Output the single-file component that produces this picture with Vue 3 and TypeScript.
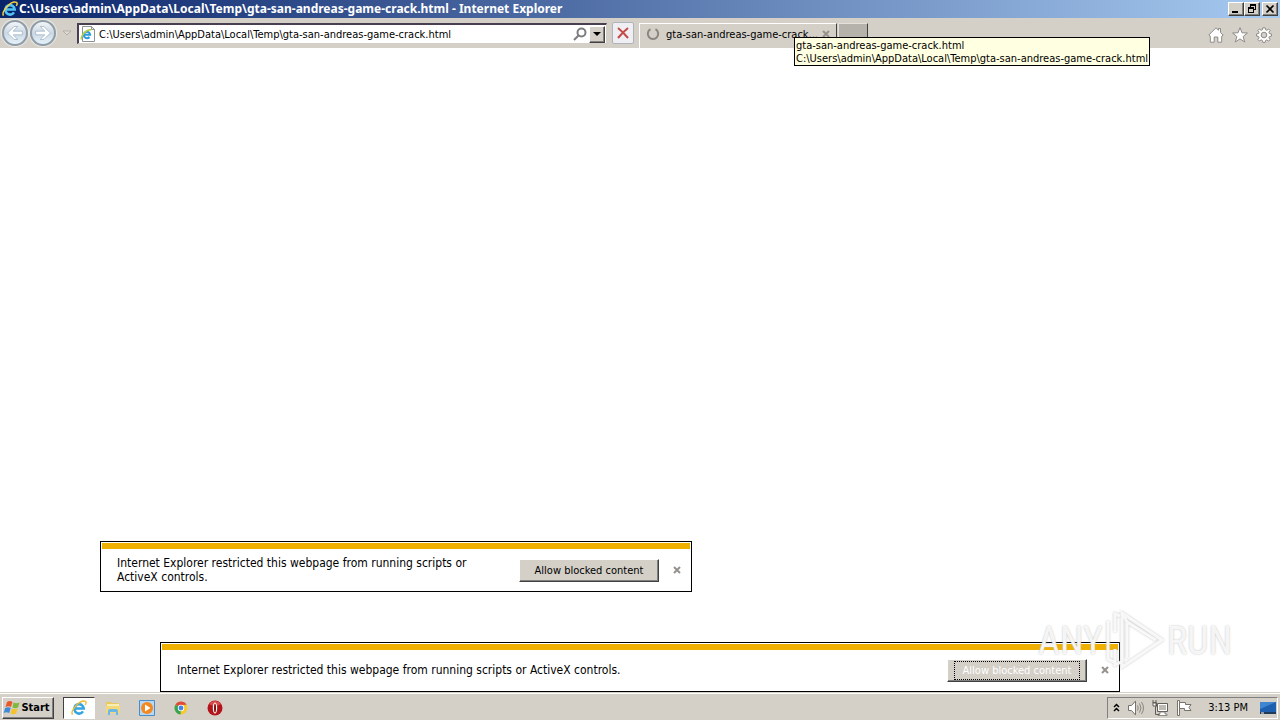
<script setup lang="ts">
import { ref } from 'vue'

const path = 'C:\\Users\\admin\\AppData\\Local\\Temp\\gta-san-andreas-game-crack.html'
const file = 'gta-san-andreas-game-crack.html'
const address = ref(path)
const notice = 'Internet Explorer restricted this webpage from running scripts or ActiveX controls.'
</script>

<template>
  <div class="desktop">
    <header class="titlebar">
      <svg class="ie" viewBox="0 0 16 16" aria-hidden="true">
        <path d="M3.5 8.5h9.2A4.7 4.7 0 1 0 12 11.4" fill="none" stroke="#4fc3f5" stroke-width="2.6" />
        <path d="M1.5 14.6C-1 11 9-1 14.5 1.4c1 .6.7 2-.2 3.4" fill="none" stroke="#f6d33c" stroke-width="1.5" />
      </svg>
      <h1>{{ path }} - Internet Explorer</h1>
      <div class="winbtns">
        <button class="wb" aria-label="Minimize"><svg viewBox="0 0 12 10"><path d="M2 7h6v2H2z" /></svg></button>
        <button class="wb" aria-label="Restore"><svg viewBox="0 0 12 10" shape-rendering="crispEdges"><path d="M4 0h6v6H8V5h1V2H5v1H4zM2 3h6v6H2zM3 5v3h4V5z" fill-rule="evenodd" /></svg></button>
        <button class="wb last" aria-label="Close"><svg viewBox="0 0 12 10"><path d="M2.5 1.5l7 7m0-7l-7 7" stroke="#000" stroke-width="1.7" /></svg></button>
      </div>
    </header>

    <nav class="toolbar">
      <div class="history">
        <button class="round" aria-label="Back"><svg viewBox="0 0 26 26"><path d="M5 13l7-7h4l-5 5h10v4H11l5 5h-4z" /></svg></button>
        <button class="round" aria-label="Forward"><svg viewBox="0 0 26 26"><path d="M21 13l-7-7h-4l5 5H5v4h10l-5 5h4z" /></svg></button>
        <button class="drop" aria-label="Recent pages"><svg viewBox="0 0 10 6"><path d="M1 1h8L5 5z" fill="#dedad5" stroke="#b5afa8" /></svg></button>
      </div>
      <div class="address">
        <svg class="page" viewBox="0 0 16 16" aria-hidden="true">
          <path d="M2.5.5h9l3 3v12h-12z" fill="#fff" stroke="#8e9299" />
          <path d="M11.5.5v3h3" fill="none" stroke="#8e9299" />
          <path d="M4 8.800h6.200A3.200 3.200 0 1 0 9.500 11" fill="none" stroke="#2e9be0" stroke-width="2" />
          <path d="M1.500 13.500C0 10 7 2.500 11.500 4" fill="none" stroke="#b5cf3a" stroke-width="1.500" />
        </svg>
        <input v-model="address" aria-label="Address" spellcheck="false" />
        <button class="search" aria-label="Search"><svg viewBox="0 0 14 14"><circle cx="8.500" cy="5.500" r="4" /><path d="M5.500 8.500L1 13" /></svg></button>
        <button class="combo" aria-label="Show address list"><svg viewBox="0 0 8 4"><path d="M0 0h8L4 4z" /></svg></button>
      </div>
      <button class="stop" aria-label="Stop"><svg viewBox="0 0 12 12"><path d="M1 1q5 4 10 10M11 1Q6 5 1 11" /></svg></button>
      <div class="tab">
        <svg class="spin" viewBox="0 0 14 14" aria-hidden="true"><path d="M4.500 2.200A5.200 5.200 0 1 0 9.500 2.200" /></svg>
        <span class="tabname">gta-san-andreas-game-crack...</span>
        <button class="x" aria-label="Close tab"><svg viewBox="0 0 8 8"><path d="M1 1l6 6M7 1L1 7" /></svg></button>
      </div>
      <button class="newtab" aria-label="New tab"></button>
      <div class="tools">
        <button aria-label="Home"><svg viewBox="0 0 16 16"><path d="M.8 8L8 .8l2.500 2.500V1.500h2v4L15.200 8l-1.500 1.200V15.200H9.800V10H6.200v5.200H2.300V9.200z" /></svg></button>
        <button aria-label="Favorites"><svg viewBox="0 0 16 16"><path d="M8 .7l2 5.100 5.400.2-4.200 3.500 1.500 5.500L8 11.900 3.300 15l1.500-5.500L.6 6 6 5.800z" /></svg></button>
        <button aria-label="Tools"><svg viewBox="0 0 16 16"><path d="M6.800.8h2.400l.4 2 1.300.5L12.600 2l1.500 1.500-1.200 1.700.5 1.300 2 .4v2.300l-2 .4-.5 1.300 1.200 1.700-1.500 1.500-1.700-1.200-1.300.5-.4 2H6.800l-.4-2-1.300-.5L3.400 14l-1.500-1.500 1.200-1.700-.5-1.300-2-.4V6.900l2-.4.5-1.300L1.900 3.500 3.400 2l1.700 1.300 1.300-.5zM8 5.200a2.800 2.800 0 1 0 0 5.600 2.800 2.800 0 1 0 0-5.600z" fill-rule="evenodd" /></svg></button>
      </div>
      <div class="tooltip" role="tooltip">{{ file }}<br />{{ path }}</div>
    </nav>

    <main>
      <section class="notice small">
        <p>{{ notice }}</p>
        <button class="allow">Allow blocked content</button>
        <button class="x" aria-label="Dismiss"><svg viewBox="0 0 8 8"><path d="M1 1l6 6M7 1L1 7" /></svg></button>
      </section>
      <section class="notice wide">
        <p>{{ notice }}</p>
        <button class="allow focus"><span>Allow blocked content</span></button>
        <button class="x" aria-label="Dismiss"><svg viewBox="0 0 8 8"><path d="M1 1l6 6M7 1L1 7" /></svg></button>
      </section>
      <div class="mark">
        <span>ANY</span>
        <svg viewBox="0 0 64 64" aria-hidden="true">
          <path d="M5 12v38l6 3M17 7l-5-2v18M12 40v16l6-3M19 4l40 27-40 27zM24 13v36M19 4l5 9 29 18" />
        </svg>
        <span>RUN</span>
      </div>
    </main>

    <footer class="taskbar">
      <button class="start">
        <svg viewBox="0 0 18 16" aria-hidden="true">
          <path d="M4 2q3-2 5.500 0L8 7Q5.500 5.500 2.500 7z" fill="#e8582c" />
          <path d="M10.500 2.500q3 1.500 6 0L15 7.500q-3 1.500-5.500 0z" fill="#7fb83a" />
          <path d="M2.200 8q3-1.500 5.500 0L6.200 13Q3.500 11.500.7 13z" fill="#3f8ad8" />
          <path d="M9 8.500q3 1.500 5.700 0L13.200 13.500q-3 1.500-5.700 0z" fill="#f5c22c" />
        </svg>
        Start
      </button>
      <button class="task active" aria-label="Internet Explorer">
        <svg viewBox="0 0 16 16">
          <path d="M3.500 8.500h9.200A4.700 4.700 0 1 0 12 11.400" fill="none" stroke="#35a5e3" stroke-width="2.600" />
          <path d="M1.500 14.600C-1 11 9-1 14.500 1.400c1 .6.7 2-.2 3.400" fill="none" stroke="#e9bd35" stroke-width="1.400" />
        </svg>
      </button>
      <button class="task" aria-label="Explorer">
        <svg viewBox="0 0 16 16">
          <path d="M1 2h5l1 1h7v10H1z" fill="#e9c95f" />
          <path d="M2 4h12v8H2z" fill="#fbeeb0" />
          <path d="M1 6h14v7H1z" fill="#f3d97a" />
          <path d="M3 15v-4q0-2 2-2h6q2 0 2 2v4h-2v-3H5v3z" fill="#6bb7e6" />
        </svg>
      </button>
      <button class="task" aria-label="Media Player">
        <svg viewBox="0 0 16 16">
          <path d="M.5.5h15v15H.5z" fill="#b7d8f2" stroke="#4a8cc7" />
          <circle cx="8" cy="8" r="6" fill="#f4871f" />
          <path d="M6 4.500v7L11.500 8z" fill="#fff" />
        </svg>
      </button>
      <button class="task" aria-label="Chrome">
        <svg viewBox="0 0 16 16">
          <circle cx="8" cy="8" r="6.500" fill="#f7c92e" />
          <path d="M8 8L2.400 4.700A6.500 6.500 0 0 1 13.600 4.700L8 5z" fill="#dd4b3c" />
          <path d="M8 8L2.400 4.700A6.500 6.500 0 0 0 7.500 14.500z" fill="#37a455" />
          <circle cx="8" cy="8" r="3.200" fill="#fff" />
          <circle cx="8" cy="8" r="2.400" fill="#4285e8" />
        </svg>
      </button>
      <button class="task" aria-label="Opera">
        <svg viewBox="0 0 16 16">
          <circle cx="8" cy="8" r="7.500" fill="#b3141a" />
          <path d="M2 4a7.500 7.500 0 0 1 12 0Q8 8 2 4z" fill="#d9484a" />
          <ellipse cx="8" cy="8" rx="2.200" ry="5.500" fill="#fff" />
          <ellipse cx="8" cy="8" rx="1" ry="4.500" fill="#7d0c10" />
        </svg>
      </button>
      <div class="tray">
        <button class="chev" aria-label="Show hidden icons"><svg viewBox="0 0 7 9"><path d="M1 4l2.500-2.500L6 4M1 8l2.500-2.500L6 8" /></svg></button>
        <button aria-label="Volume"><svg viewBox="0 0 16 16"><path d="M.5 5.500h3L7.500 1v14L3.500 10.500h-3z" fill="#fff" stroke="#77726c" /><path d="M9.500 5.500q1.500 2.500 0 5M11.500 3.500q3 4.500 0 9M13.500 2q4 6 0 12" fill="none" stroke="#8a857f" /></svg></button>
        <button aria-label="Network"><svg viewBox="0 0 16 16"><path d="M5.500 3.500h10v8h-10z" fill="#d7d4cf" stroke="#625e59" /><path d="M6.500 4.500h8v6h-8z" fill="#bdb9b3" stroke="#fff" /><path d="M8 12h5v2h2v1.500H6V14h2z" fill="#fff" stroke="#77726c" stroke-width=".8" /><path d="M.5 2.500h4v4h-1v8h4" fill="none" stroke="#625e59" /><path d="M1 2.500V0M4 2.500V0M1 3h3v3H1z" fill="#fff" stroke="#625e59" /></svg></button>
        <button aria-label="Action Center"><svg viewBox="0 0 16 16"><path d="M1.500 15.500v-15h2v15z" fill="#fff" stroke="#77726c" /><path d="M3.500 2.500h6v2h5.500l-2 3 2 3H8.500v-2h-5z" fill="#fff" stroke="#77726c" /></svg></button>
        <time>3:13 PM</time>
        <button aria-label="Show desktop"><svg viewBox="0 0 16 16"><path d="M0 2h16v10H0z" fill="#1f5fb0" /><path d="M0 2h16L0 9z" fill="#3f86d0" /><path d="M0 12h16v2H0z" fill="#243b58" /><path d="M1 13h3" stroke="#fff" /></svg></button>
      </div>
    </footer>
  </div>
</template>

<style>
body {
  margin: 0;
  background: #fff;
}
</style>

<style scoped>
.desktop {
  display: flex;
  flex-direction: column;
  height: 100vh;
  overflow: hidden;
  color: #000;
  font: 11px/13px "DejaVu Sans Condensed", "Noto Sans", sans-serif;
}
* {
  box-sizing: border-box;
}
button {
  display: flex;
  align-items: center;
  justify-content: center;
  flex: none;
  margin: 0;
  padding: 0;
  border: 0;
  background: none;
  color: inherit;
  font: inherit;
}
svg {
  display: block;
  flex: none;
}
.titlebar {
  display: flex;
  align-items: center;
  height: 18px;
  flex: none;
  padding: 0 2px;
  background: linear-gradient(90deg, #0a246a, #a6caf0);
  color: #fff;
}
.ie {
  width: 16px;
  height: 16px;
}
h1 {
  flex: 1;
  margin: 0 0 0 1px;
  font-family: "Noto Sans", "DejaVu Sans Condensed", sans-serif;
  font-size: 12px;
  line-height: 16px;
  font-weight: 700;
  white-space: nowrap;
}
.winbtns {
  display: flex;
}
.wb {
  width: 16px;
  height: 14px;
  background: #d4d0c8;
  border: 1px solid;
  border-color: #fff #404040 #404040 #fff;
  box-shadow: inset -1px -1px #808080;
}
.wb svg {
  width: 12px;
  height: 10px;
}
.wb.last {
  margin-left: 2px;
}
.toolbar {
  position: relative;
  display: flex;
  align-items: flex-start;
  height: 30px;
  flex: none;
  background: #d4d0c8;
}
.history {
  display: flex;
  align-items: center;
  width: 77px;
  height: 30px;
  padding-left: 2px;
  gap: 2px;
}
.round {
  width: 26px;
  height: 26px;
  border: 2px solid #8f9da8;
  border-radius: 50%;
  background: linear-gradient(#f4f6f8, #cbd8e4 50%, #e6f2fa);
  box-shadow: 0 0 1px 1px #ecebe9;
}
.round svg {
  width: 24px;
  height: 24px;
  fill: #fff;
  stroke: #a9bccd;
}
.drop {
  width: 18px;
}
.drop svg {
  width: 10px;
  height: 6px;
}
.address {
  display: flex;
  align-items: center;
  width: 530px;
  height: 21px;
  margin-top: 5px;
  padding: 0 1px;
  background: #fff;
  border: 1px solid #d4d0c8;
  border-top: 2px solid #484050;
  border-left: 2px solid #484050;
}
.page {
  width: 16px;
  height: 16px;
}
input {
  flex: 1;
  min-width: 0;
  height: 17px;
  margin-left: 3px;
  padding: 0;
  border: 0;
  outline: 0;
  background: none;
  color: #000;
  font: inherit;
}
.search svg {
  width: 14px;
  height: 14px;
  fill: none;
  stroke: #7d7d7d;
  stroke-width: 2;
}
.combo {
  width: 16px;
  height: 17px;
  margin-left: 2px;
  background: #d4d0c8;
  border: 1px solid;
  border-color: #fff #404040 #404040 #fff;
  box-shadow: inset -1px -1px #808080;
}
.combo svg {
  width: 8px;
  height: 4px;
}
.stop {
  width: 22px;
  height: 22px;
  margin: 4px 0 0 5px;
  border: 1px solid #b0b3bd;
  border-radius: 2px;
  background: #eeeef3;
}
.stop svg {
  width: 12px;
  height: 12px;
  fill: none;
  stroke: #c34a48;
  stroke-width: 2;
}
.tab {
  display: flex;
  align-items: center;
  width: 198px;
  height: 25px;
  margin: 5px 0 0 5px;
  padding: 0 6px 4px;
  border-top: 1px solid #fff;
  border-left: 1px solid #fff;
  border-right: 1px solid #404040;
}
.spin {
  width: 14px;
  height: 14px;
  fill: none;
  stroke: #8a857f;
  stroke-width: 2;
}
.tabname {
  flex: 1;
  margin-left: 6px;
  white-space: nowrap;
}
.x svg {
  width: 8px;
  height: 8px;
  stroke: #96918c;
  stroke-width: 2;
}
.newtab {
  width: 30px;
  height: 20px;
  margin: 5px 0 0 1px;
  background: #b5b1ab;
  border: 1px solid #e4e1dc;
  border-right: 1px solid #404040;
}
.tools {
  display: flex;
  gap: 8px;
  margin: 9px 8px 0 auto;
}
.tools svg {
  width: 16px;
  height: 16px;
  fill: #fff;
  stroke: #8d8a86;
}
.tooltip {
  position: absolute;
  z-index: 2;
  left: 794px;
  top: 19px;
  padding: 1px 1px 0;
  border: 1px solid #000;
  background: #ffffe1;
  white-space: nowrap;
}
main {
  position: relative;
  display: flex;
  flex: 1;
  flex-direction: column;
  justify-content: flex-end;
  min-height: 0;
  background: #fff;
}
.notice {
  display: flex;
  align-items: center;
  flex: none;
  padding: 6px 10px 0 16px;
  border: 1px solid #000;
  background: linear-gradient(#f0b000, #f0b000) 1px 1px / calc(100% - 2px) 6px no-repeat #fff;
}
.notice p {
  flex: 1;
  margin: 0;
  font-size: 12px;
  line-height: 14px;
}
.small {
  width: 592px;
  height: 51px;
  margin: 0 0 50px 100px;
}
.wide {
  width: 75%;
  height: 50px;
  margin: 0 auto;
}
.allow {
  width: 140px;
  height: 23px;
  margin: 1px 14px 0 16px;
  background: #d4d0c8;
  border: 1px solid;
  border-color: #fff #404040 #404040 #fff;
  box-shadow: inset -1px -1px #808080;
}
.focus {
  color: #fff;
}
.focus span {
  padding: 2px 8px;
  border: 1px dotted #000;
}
.mark {
  position: absolute;
  right: 48px;
  bottom: 19px;
  display: flex;
  align-items: center;
  color: #ffffffd9;
  font: 38px/64px "Roboto Condensed", "Liberation Sans Narrow", "DejaVu Sans Condensed", sans-serif;
  text-shadow: 0 0 2px #bbb;
  pointer-events: none;
}
.mark svg {
  width: 64px;
  height: 64px;
  fill: none;
  stroke: #ffffffd9;
  stroke-width: 3;
  filter: drop-shadow(0 0 1px #bbb);
}
.taskbar {
  display: flex;
  align-items: center;
  height: 28px;
  flex: none;
  padding: 2px 2px 0;
  border-top: 1px solid #d4d0c8;
  background: #d4d0c8;
  box-shadow: inset 0 1px #fff;
}
.start {
  width: 52px;
  height: 22px;
  padding-right: 3px;
  border: 1px solid;
  border-color: #fff #404040 #404040 #fff;
  box-shadow: inset -1px -1px #808080;
  font-weight: 700;
}
.start svg {
  width: 18px;
  height: 16px;
}
.task {
  width: 32px;
  height: 22px;
  margin-left: 2px;
}
.task svg {
  width: 16px;
  height: 16px;
}
.task.active {
  margin-left: 9px;
  border: 1px solid;
  border-color: #404040 #fff #fff #404040;
  background: #fff;
}
.tray {
  display: flex;
  align-items: center;
  height: 22px;
  margin-left: auto;
  padding: 0 1px 0 5px;
  gap: 8px;
  border: 1px solid;
  border-color: #808080 #fff #fff #808080;
}
.tray svg {
  width: 16px;
  height: 16px;
}
.tray .chev svg {
  width: 7px;
  height: 9px;
  fill: none;
  stroke: #000;
  stroke-width: 1.5;
}
time {
  margin: 0 4px 0 8px;
}
</style>
